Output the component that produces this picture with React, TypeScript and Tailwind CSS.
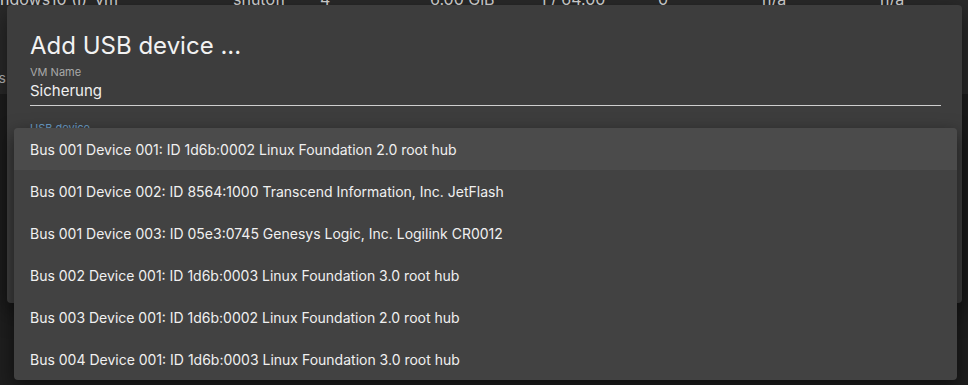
import React from 'react';

const devices = [
    'Bus 001 Device 001: ID 1d6b:0002 Linux Foundation 2.0 root hub',
    'Bus 001 Device 002: ID 8564:1000 Transcend Information, Inc. JetFlash',
    'Bus 001 Device 003: ID 05e3:0745 Genesys Logic, Inc. Logilink CR0012',
    'Bus 002 Device 001: ID 1d6b:0003 Linux Foundation 3.0 root hub',
    'Bus 003 Device 001: ID 1d6b:0002 Linux Foundation 2.0 root hub',
    'Bus 004 Device 001: ID 1d6b:0003 Linux Foundation 3.0 root hub',
];

// columns of the vm table behind the dialog (only the bottom of the text shows)
const tableCells = [
    { text: 'ndows10 (I)', w: 'w-[95px]' },
    { text: 'vm', w: 'w-[138px]' },
    { text: 'shutoff', w: 'w-[87px]' },
    { text: '4', w: 'w-[110px]' },
    { text: '6.00 GiB', w: 'w-[110px]' },
    { text: '1 / 64.00', w: 'w-[118px]' },
    { text: '0', w: 'w-[104px]' },
    { text: 'n/a', w: 'w-[118px]' },
    { text: 'n/a', w: 'w-[80px]' },
];

export default function App() {
    return (
        <div className="relative h-[385px] w-[968px] overflow-hidden bg-[#1e1e1e] font-['Inter',sans-serif]">
            {/* page behind the modal */}
            <div className="h-[105px] bg-[#2a2a2a]">
                <div className="-mt-[11px] flex text-[16px] leading-[20px] text-[#d8d8d8]">
                    {tableCells.map((c, i) => (
                        <div key={i} className={c.w}>
                            {c.text}
                        </div>
                    ))}
                </div>
                <div className="mt-[59px] text-[14px] leading-[20px] text-[#bbbbbb]">
                    <span className="-ml-[6px]">ts</span>
                </div>
            </div>

            {/* dialog */}
            <div className="absolute left-[7px] top-[5px] h-[298px] w-[955px] rounded-[4px] bg-[#3d3d3d] pl-[23px] pr-[21px] pt-[25px] shadow-[0_8px_24px_rgba(0,0,0,0.5)]">
                <h2 className="text-[24px] leading-[32px] font-normal text-[#f2f2f2]">
                    Add USB device ...
                </h2>
                <div className="mt-[3px] border-b border-[#cfcfcf] pb-[4px]">
                    <div className="text-[11px] leading-[14px] text-[#a9a9a9]">
                        VM Name
                    </div>
                    <div className="mt-[2px] text-[15px] leading-[20px] text-[#f0f0f0]">
                        Sicherung
                    </div>
                </div>
                <div className="mt-[15px] text-[11px] leading-[14px] text-[#6b9dc8]">
                    USB device
                </div>
            </div>

            {/* open select menu */}
            <ul className="absolute left-[14px] top-[128px] w-[943px] overflow-hidden rounded-[4px] bg-[#424242] shadow-[0_6px_18px_rgba(0,0,0,0.55)]">
                {devices.map((d, i) => (
                    <li
                        key={d}
                        className={`flex h-[42px] items-center px-[16px] text-[14px] text-[#f0f0f0] ${
                            i === 0 ? 'bg-[#4b4b4b]' : ''
                        }`}>
                        {d}
                    </li>
                ))}
            </ul>
        </div>
    );
}
